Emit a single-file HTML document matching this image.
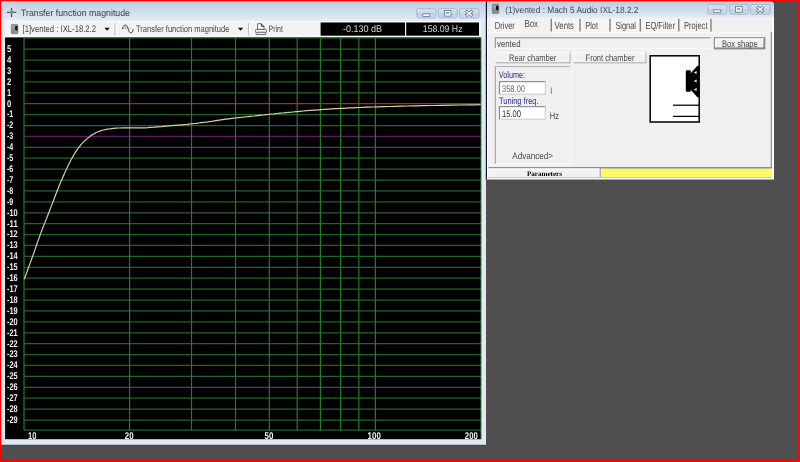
<!DOCTYPE html>
<html lang="en">
<head>
<meta charset="utf-8">
<title>Transfer function magnitude</title>
<style>
html,body{margin:0;padding:0;background:#4f4f4f;overflow:hidden}
body{width:800px;height:462px;font-family:"Liberation Sans",sans-serif}
svg{display:block;position:absolute;left:0;top:0;will-change:transform}
</style>
</head>
<body>
<svg width="800" height="462" viewBox="0 0 800 462" text-rendering="geometricPrecision">
<defs>
<linearGradient id="tb" x1="0" y1="0" x2="0" y2="1">
<stop offset="0" stop-color="#c2cad6"/><stop offset="0.2" stop-color="#c6d4e4"/><stop offset="0.55" stop-color="#cfddec"/><stop offset="0.85" stop-color="#dde7f3"/><stop offset="1" stop-color="#e8eff7"/>
</linearGradient>
<linearGradient id="btn" x1="0" y1="0" x2="0" y2="1">
<stop offset="0" stop-color="#d6e1ef"/><stop offset="0.45" stop-color="#ccdaeb"/><stop offset="0.5" stop-color="#c0d0e4"/><stop offset="1" stop-color="#cbd9ea"/>
</linearGradient>
</defs>
<rect x="0" y="0" width="800" height="462" fill="#4f4f4f" />
<g id="win-plot">
<rect x="1" y="1" width="485" height="444.3" fill="#2e3238" />
<rect x="1" y="1" width="485" height="443.8" fill="#e0e8f4" />
<rect x="1" y="1" width="485" height="20" fill="url(#tb)" />
<g stroke="#333" stroke-width="1" fill="none"><line x1="7" y1="12.3" x2="16.3" y2="12.3"/><line x1="11.6" y1="8" x2="11.6" y2="17"/></g>
<circle cx="11.6" cy="12.3" r="1.8" fill="#8a8a80"/>
<text x="21" y="16.3" font-size="9.3" fill="#3a4250" font-family="Liberation Sans, sans-serif" textLength="109" lengthAdjust="spacingAndGlyphs" >Transfer function magnitude</text>
<rect x="416.8" y="8.6" width="19" height="9.4" rx="1.6" fill="url(#btn)" stroke="#9db1cc" stroke-width="0.8"/>
<rect x="422.8" y="13.8" width="7" height="2.6" fill="#f4f6f8" stroke="#5d6a7c" stroke-width="0.7"/>
<rect x="438.2" y="8.6" width="19" height="9.4" rx="1.6" fill="url(#btn)" stroke="#9db1cc" stroke-width="0.8"/>
<rect x="444.4" y="10.5" width="6.6" height="5.6" fill="#f4f6f8" stroke="#5d6a7c" stroke-width="0.7"/>
<rect x="445.9" y="12.100000000000001" width="3.2" height="1.6" fill="#8796aa"/>
<rect x="459.4" y="8.6" width="19.6" height="9.4" rx="1.6" fill="url(#btn)" stroke="#9db1cc" stroke-width="0.8"/>
<g stroke="#5d6a7c" stroke-width="2.9" stroke-linecap="square"><line x1="467.09999999999997" y1="11.600000000000001" x2="471.3" y2="15.0"/><line x1="467.09999999999997" y1="15.0" x2="471.3" y2="11.600000000000001"/></g>
<g stroke="#f4f6f8" stroke-width="1.6" stroke-linecap="square"><line x1="467.09999999999997" y1="11.600000000000001" x2="471.3" y2="15.0"/><line x1="467.09999999999997" y1="15.0" x2="471.3" y2="11.600000000000001"/></g>
<rect x="5" y="21" width="476.4" height="16.5" fill="#f3f3f3" />
<rect x="5" y="21" width="476.4" height="1" fill="#fbfbfb" />
<rect x="5" y="35.8" width="476.4" height="1.6" fill="#ffffff" />
<rect x="11.4" y="24.4" width="6.5" height="9.3" rx="0.8" fill="#8e8e8e" stroke="#6e6e6e" stroke-width="0.6"/>
<path d="M15.4 26 L17.4 26 L17.4 30.4 L16 30.4 L15 29 Z" fill="#0c0c0c"/>
<rect x="12.4" y="25.6" width="2.4" height="3" fill="#a4a4a4" />
<text x="22.5" y="32.1" font-size="9.5" fill="#484848" font-family="Liberation Sans, sans-serif" textLength="73.5" lengthAdjust="spacingAndGlyphs" >[1]vented : IXL-18.2.2</text>
<path d="M104.4 27.8 L109.8 27.8 L107.1 30.8 Z" fill="#111"/>
<line x1="115" y1="22.8" x2="115" y2="35.5" stroke="#c6c6c6" stroke-width="1.4" />
<line x1="116.2" y1="22.8" x2="116.2" y2="35.5" stroke="#fdfdfd" stroke-width="1" />
<path d="M122.4 29.2 C123.2 24.6,126.4 23.6,127.9 28 L127.9 29.2 Z" fill="#c9c9c9"/>
<ellipse cx="130.7" cy="30.2" rx="2.2" ry="2.4" fill="#fbfbfb" stroke="#b5b5b5" stroke-width="0.6"/>
<path d="M122.4 29.2 C123.2 24.4,126.4 23.4,127.9 28 C128.8 31.2,129.6 32.8,130.9 32.8 C132.2 32.8,132.9 31.4,133.2 29.4" fill="none" stroke="#4a4a4a" stroke-width="1"/>
<text x="136" y="32.1" font-size="9.5" fill="#484848" font-family="Liberation Sans, sans-serif" textLength="93.4" lengthAdjust="spacingAndGlyphs" >Transfer function magnitude</text>
<path d="M237.8 27.8 L243.2 27.8 L240.5 30.8 Z" fill="#111"/>
<line x1="248.5" y1="22.8" x2="248.5" y2="35.5" stroke="#bcbcbc" stroke-width="1.2" />
<line x1="249.6" y1="22.8" x2="249.6" y2="35.5" stroke="#fdfdfd" stroke-width="1" />
<g fill="#fafafa" stroke="#5c5c5c" stroke-width="0.9"><path d="M257.6 29.6 L257.6 23.7 L261.4 23.7 L264 26.4 L264 29.6 Z"/><rect x="255.5" y="29.4" width="11" height="3" rx="0.9"/><rect x="256.1" y="32.3" width="9.8" height="2.2" rx="0.5"/></g>
<path d="M261.4 23.9 L261.6 26.3 L263.8 26.5" fill="none" stroke="#222" stroke-width="0.9"/>
<text x="268.6" y="32.1" font-size="9.5" fill="#484848" font-family="Liberation Sans, sans-serif" textLength="14.3" lengthAdjust="spacingAndGlyphs" >Print</text>
<rect x="320.6" y="22.5" width="84.4" height="13.2" fill="#000" />
<rect x="406.2" y="22.5" width="72.8" height="13.2" fill="#000" />
<text x="343" y="32.4" font-size="9.7" fill="#d4d4d4" font-family="Liberation Sans, sans-serif" textLength="39" lengthAdjust="spacingAndGlyphs" >-0.130 dB</text>
<text x="422.8" y="32.4" font-size="9.7" fill="#d4d4d4" font-family="Liberation Sans, sans-serif" textLength="39.7" lengthAdjust="spacingAndGlyphs" >158.09 Hz</text>
<rect x="5.1" y="37.4" width="476.1" height="401.8" fill="#000" />
<g id="grid">
<line x1="24.0" y1="38.15" x2="480.9" y2="38.15" stroke="#1f6e2a" stroke-width="0.9" />
<line x1="24.0" y1="49.17" x2="480.9" y2="49.17" stroke="#256428" stroke-width="1.25" />
<line x1="24.0" y1="60.07" x2="480.9" y2="60.07" stroke="#256428" stroke-width="1.25" />
<line x1="24.0" y1="70.98" x2="480.9" y2="70.98" stroke="#256428" stroke-width="1.25" />
<line x1="24.0" y1="81.89" x2="480.9" y2="81.89" stroke="#256428" stroke-width="1.25" />
<line x1="24.0" y1="92.79" x2="480.9" y2="92.79" stroke="#256428" stroke-width="1.25" />
<line x1="24.0" y1="103.7" x2="480.9" y2="103.7" stroke="#a82a24" stroke-width="1.25" />
<line x1="24.0" y1="114.61" x2="480.9" y2="114.61" stroke="#256428" stroke-width="1.25" />
<line x1="24.0" y1="125.51" x2="480.9" y2="125.51" stroke="#256428" stroke-width="1.25" />
<line x1="24.0" y1="136.42" x2="480.9" y2="136.42" stroke="#5e1c60" stroke-width="1.25" />
<line x1="24.0" y1="147.33" x2="480.9" y2="147.33" stroke="#256428" stroke-width="1.25" />
<line x1="24.0" y1="158.24" x2="480.9" y2="158.24" stroke="#256428" stroke-width="1.25" />
<line x1="24.0" y1="169.14" x2="480.9" y2="169.14" stroke="#256428" stroke-width="1.25" />
<line x1="24.0" y1="180.05" x2="480.9" y2="180.05" stroke="#256428" stroke-width="1.25" />
<line x1="24.0" y1="190.96" x2="480.9" y2="190.96" stroke="#256428" stroke-width="1.25" />
<line x1="24.0" y1="201.86" x2="480.9" y2="201.86" stroke="#256428" stroke-width="1.25" />
<line x1="24.0" y1="212.77" x2="480.9" y2="212.77" stroke="#256428" stroke-width="1.25" />
<line x1="24.0" y1="223.68" x2="480.9" y2="223.68" stroke="#256428" stroke-width="1.25" />
<line x1="24.0" y1="234.58" x2="480.9" y2="234.58" stroke="#256428" stroke-width="1.25" />
<line x1="24.0" y1="245.49" x2="480.9" y2="245.49" stroke="#256428" stroke-width="1.25" />
<line x1="24.0" y1="256.4" x2="480.9" y2="256.4" stroke="#256428" stroke-width="1.25" />
<line x1="24.0" y1="267.31" x2="480.9" y2="267.31" stroke="#256428" stroke-width="1.25" />
<line x1="24.0" y1="278.21" x2="480.9" y2="278.21" stroke="#256428" stroke-width="1.25" />
<line x1="24.0" y1="289.12" x2="480.9" y2="289.12" stroke="#256428" stroke-width="1.25" />
<line x1="24.0" y1="300.03" x2="480.9" y2="300.03" stroke="#256428" stroke-width="1.25" />
<line x1="24.0" y1="310.93" x2="480.9" y2="310.93" stroke="#256428" stroke-width="1.25" />
<line x1="24.0" y1="321.84" x2="480.9" y2="321.84" stroke="#256428" stroke-width="1.25" />
<line x1="24.0" y1="332.75" x2="480.9" y2="332.75" stroke="#256428" stroke-width="1.25" />
<line x1="24.0" y1="343.65" x2="480.9" y2="343.65" stroke="#256428" stroke-width="1.25" />
<line x1="24.0" y1="354.56" x2="480.9" y2="354.56" stroke="#256428" stroke-width="1.25" />
<line x1="24.0" y1="365.47" x2="480.9" y2="365.47" stroke="#256428" stroke-width="1.25" />
<line x1="24.0" y1="376.38" x2="480.9" y2="376.38" stroke="#256428" stroke-width="1.25" />
<line x1="24.0" y1="387.28" x2="480.9" y2="387.28" stroke="#256428" stroke-width="1.25" />
<line x1="24.0" y1="398.19" x2="480.9" y2="398.19" stroke="#256428" stroke-width="1.25" />
<line x1="24.0" y1="409.1" x2="480.9" y2="409.1" stroke="#256428" stroke-width="1.25" />
<line x1="24.0" y1="420.0" x2="480.9" y2="420.0" stroke="#256428" stroke-width="1.25" />
<line x1="24.0" y1="430.1" x2="480.9" y2="430.1" stroke="#256428" stroke-width="1.25" />
<line x1="24.0" y1="37.8" x2="24.0" y2="430.6" stroke="#22752c" stroke-width="1.25" />
<line x1="129.6" y1="37.8" x2="129.6" y2="430.6" stroke="#237a28" stroke-width="1.2" />
<line x1="191.5" y1="37.8" x2="191.5" y2="430.6" stroke="#237a28" stroke-width="1.2" />
<line x1="235.5" y1="37.8" x2="235.5" y2="430.6" stroke="#237a28" stroke-width="1.2" />
<line x1="269.3" y1="37.8" x2="269.3" y2="430.6" stroke="#237a28" stroke-width="1.2" />
<line x1="297.2" y1="37.8" x2="297.2" y2="430.6" stroke="#237a28" stroke-width="1.2" />
<line x1="320.4" y1="37.8" x2="320.4" y2="430.6" stroke="#237a28" stroke-width="1.2" />
<line x1="340.6" y1="37.8" x2="340.6" y2="430.6" stroke="#237a28" stroke-width="1.2" />
<line x1="358.8" y1="37.8" x2="358.8" y2="430.6" stroke="#237a28" stroke-width="1.2" />
<line x1="375.4" y1="37.8" x2="375.4" y2="430.6" stroke="#237a28" stroke-width="1.2" />
<line x1="481.2" y1="37.6" x2="481.2" y2="439.1" stroke="#62d070" stroke-width="0.9" />
</g>
<g id="ylabels">
<text x="7" y="52.02" font-size="9.8" fill="#f0f0f0" font-family="Liberation Sans, sans-serif" textLength="4.3" lengthAdjust="spacingAndGlyphs" font-weight="bold">5</text>
<text x="7" y="62.92" font-size="9.8" fill="#f0f0f0" font-family="Liberation Sans, sans-serif" textLength="4.3" lengthAdjust="spacingAndGlyphs" font-weight="bold">4</text>
<text x="7" y="73.83" font-size="9.8" fill="#f0f0f0" font-family="Liberation Sans, sans-serif" textLength="4.3" lengthAdjust="spacingAndGlyphs" font-weight="bold">3</text>
<text x="7" y="84.74" font-size="9.8" fill="#f0f0f0" font-family="Liberation Sans, sans-serif" textLength="4.3" lengthAdjust="spacingAndGlyphs" font-weight="bold">2</text>
<text x="7" y="95.64" font-size="9.8" fill="#f0f0f0" font-family="Liberation Sans, sans-serif" textLength="4.3" lengthAdjust="spacingAndGlyphs" font-weight="bold">1</text>
<text x="7" y="106.55" font-size="9.8" fill="#f0f0f0" font-family="Liberation Sans, sans-serif" textLength="4.3" lengthAdjust="spacingAndGlyphs" font-weight="bold">0</text>
<text x="7" y="117.46" font-size="9.8" fill="#f0f0f0" font-family="Liberation Sans, sans-serif" textLength="6.3" lengthAdjust="spacingAndGlyphs" font-weight="bold">-1</text>
<text x="7" y="128.36" font-size="9.8" fill="#f0f0f0" font-family="Liberation Sans, sans-serif" textLength="6.3" lengthAdjust="spacingAndGlyphs" font-weight="bold">-2</text>
<text x="7" y="139.27" font-size="9.8" fill="#f0f0f0" font-family="Liberation Sans, sans-serif" textLength="6.3" lengthAdjust="spacingAndGlyphs" font-weight="bold">-3</text>
<text x="7" y="150.18" font-size="9.8" fill="#f0f0f0" font-family="Liberation Sans, sans-serif" textLength="6.3" lengthAdjust="spacingAndGlyphs" font-weight="bold">-4</text>
<text x="7" y="161.09" font-size="9.8" fill="#f0f0f0" font-family="Liberation Sans, sans-serif" textLength="6.3" lengthAdjust="spacingAndGlyphs" font-weight="bold">-5</text>
<text x="7" y="171.99" font-size="9.8" fill="#f0f0f0" font-family="Liberation Sans, sans-serif" textLength="6.3" lengthAdjust="spacingAndGlyphs" font-weight="bold">-6</text>
<text x="7" y="182.9" font-size="9.8" fill="#f0f0f0" font-family="Liberation Sans, sans-serif" textLength="6.3" lengthAdjust="spacingAndGlyphs" font-weight="bold">-7</text>
<text x="7" y="193.81" font-size="9.8" fill="#f0f0f0" font-family="Liberation Sans, sans-serif" textLength="6.3" lengthAdjust="spacingAndGlyphs" font-weight="bold">-8</text>
<text x="7" y="204.71" font-size="9.8" fill="#f0f0f0" font-family="Liberation Sans, sans-serif" textLength="6.3" lengthAdjust="spacingAndGlyphs" font-weight="bold">-9</text>
<text x="7" y="215.62" font-size="9.8" fill="#f0f0f0" font-family="Liberation Sans, sans-serif" textLength="10.7" lengthAdjust="spacingAndGlyphs" font-weight="bold">-10</text>
<text x="7" y="226.53" font-size="9.8" fill="#f0f0f0" font-family="Liberation Sans, sans-serif" textLength="10.7" lengthAdjust="spacingAndGlyphs" font-weight="bold">-11</text>
<text x="7" y="237.43" font-size="9.8" fill="#f0f0f0" font-family="Liberation Sans, sans-serif" textLength="10.7" lengthAdjust="spacingAndGlyphs" font-weight="bold">-12</text>
<text x="7" y="248.34" font-size="9.8" fill="#f0f0f0" font-family="Liberation Sans, sans-serif" textLength="10.7" lengthAdjust="spacingAndGlyphs" font-weight="bold">-13</text>
<text x="7" y="259.25" font-size="9.8" fill="#f0f0f0" font-family="Liberation Sans, sans-serif" textLength="10.7" lengthAdjust="spacingAndGlyphs" font-weight="bold">-14</text>
<text x="7" y="270.16" font-size="9.8" fill="#f0f0f0" font-family="Liberation Sans, sans-serif" textLength="10.7" lengthAdjust="spacingAndGlyphs" font-weight="bold">-15</text>
<text x="7" y="281.06" font-size="9.8" fill="#f0f0f0" font-family="Liberation Sans, sans-serif" textLength="10.7" lengthAdjust="spacingAndGlyphs" font-weight="bold">-16</text>
<text x="7" y="291.97" font-size="9.8" fill="#f0f0f0" font-family="Liberation Sans, sans-serif" textLength="10.7" lengthAdjust="spacingAndGlyphs" font-weight="bold">-17</text>
<text x="7" y="302.88" font-size="9.8" fill="#f0f0f0" font-family="Liberation Sans, sans-serif" textLength="10.7" lengthAdjust="spacingAndGlyphs" font-weight="bold">-18</text>
<text x="7" y="313.78" font-size="9.8" fill="#f0f0f0" font-family="Liberation Sans, sans-serif" textLength="10.7" lengthAdjust="spacingAndGlyphs" font-weight="bold">-19</text>
<text x="7" y="324.69" font-size="9.8" fill="#f0f0f0" font-family="Liberation Sans, sans-serif" textLength="10.7" lengthAdjust="spacingAndGlyphs" font-weight="bold">-20</text>
<text x="7" y="335.6" font-size="9.8" fill="#f0f0f0" font-family="Liberation Sans, sans-serif" textLength="10.7" lengthAdjust="spacingAndGlyphs" font-weight="bold">-21</text>
<text x="7" y="346.5" font-size="9.8" fill="#f0f0f0" font-family="Liberation Sans, sans-serif" textLength="10.7" lengthAdjust="spacingAndGlyphs" font-weight="bold">-22</text>
<text x="7" y="357.41" font-size="9.8" fill="#f0f0f0" font-family="Liberation Sans, sans-serif" textLength="10.7" lengthAdjust="spacingAndGlyphs" font-weight="bold">-23</text>
<text x="7" y="368.32" font-size="9.8" fill="#f0f0f0" font-family="Liberation Sans, sans-serif" textLength="10.7" lengthAdjust="spacingAndGlyphs" font-weight="bold">-24</text>
<text x="7" y="379.23" font-size="9.8" fill="#f0f0f0" font-family="Liberation Sans, sans-serif" textLength="10.7" lengthAdjust="spacingAndGlyphs" font-weight="bold">-25</text>
<text x="7" y="390.13" font-size="9.8" fill="#f0f0f0" font-family="Liberation Sans, sans-serif" textLength="10.7" lengthAdjust="spacingAndGlyphs" font-weight="bold">-26</text>
<text x="7" y="401.04" font-size="9.8" fill="#f0f0f0" font-family="Liberation Sans, sans-serif" textLength="10.7" lengthAdjust="spacingAndGlyphs" font-weight="bold">-27</text>
<text x="7" y="411.95" font-size="9.8" fill="#f0f0f0" font-family="Liberation Sans, sans-serif" textLength="10.7" lengthAdjust="spacingAndGlyphs" font-weight="bold">-28</text>
<text x="7" y="422.85" font-size="9.8" fill="#f0f0f0" font-family="Liberation Sans, sans-serif" textLength="10.7" lengthAdjust="spacingAndGlyphs" font-weight="bold">-29</text>
</g>
<g id="xlabels">
<text x="28" y="438.7" font-size="9.8" fill="#f0f0f0" font-family="Liberation Sans, sans-serif" textLength="8.4" lengthAdjust="spacingAndGlyphs" font-weight="bold">10</text>
<text x="124.8" y="438.7" font-size="9.8" fill="#f0f0f0" font-family="Liberation Sans, sans-serif" textLength="8.8" lengthAdjust="spacingAndGlyphs" font-weight="bold">20</text>
<text x="264.6" y="438.7" font-size="9.8" fill="#f0f0f0" font-family="Liberation Sans, sans-serif" textLength="8.8" lengthAdjust="spacingAndGlyphs" font-weight="bold">50</text>
<text x="367.6" y="438.7" font-size="9.8" fill="#f0f0f0" font-family="Liberation Sans, sans-serif" textLength="13.2" lengthAdjust="spacingAndGlyphs" font-weight="bold">100</text>
<text x="464.8" y="438.7" font-size="9.8" fill="#f0f0f0" font-family="Liberation Sans, sans-serif" textLength="13" lengthAdjust="spacingAndGlyphs" font-weight="bold">200</text>
</g>
<polyline id="curve" fill="none" stroke="#d6d0a4" stroke-width="1.2" stroke-linejoin="round" points="24.2,279.2 24.9,277.3 26.0,274.5 27.2,271.2 28.4,267.8 29.8,264.1 31.3,260.0 32.8,255.9 34.1,252.1 35.3,248.8 36.3,245.8 37.3,242.9 38.3,240.0 39.4,237.1 40.4,234.1 41.5,231.3 42.5,228.7 43.4,226.2 44.4,224.0 45.2,221.8 46.0,219.9 46.6,218.3 47.1,217.0 47.7,215.5 48.5,213.6 49.5,210.8 50.8,207.4 52.2,203.9 53.4,200.7 54.5,197.8 55.6,195.0 56.6,192.3 57.6,189.8 58.5,187.5 59.3,185.6 60.1,183.5 61.1,181.2 62.3,178.5 63.6,175.4 65.0,172.4 66.2,169.7 67.2,167.6 68.1,165.7 68.9,164.1 69.7,162.4 70.5,160.8 71.4,159.3 72.2,157.8 73.0,156.3 73.8,155.0 74.6,153.6 75.4,152.3 76.2,151.1 77.0,149.9 77.8,148.7 78.7,147.6 79.5,146.6 80.3,145.6 81.0,144.7 81.8,143.8 82.7,142.9 83.7,141.8 84.8,140.7 86.0,139.6 87.1,138.6 88.2,137.7 89.3,136.9 90.3,136.1 91.4,135.3 92.5,134.6 93.6,134.0 94.6,133.4 95.7,132.8 96.8,132.3 97.8,131.8 98.9,131.4 100.0,131.0 101.1,130.6 102.2,130.3 103.3,130.0 104.4,129.8 105.5,129.5 106.5,129.3 107.6,129.1 108.7,129.0 110.0,128.8 111.3,128.6 112.7,128.4 114.1,128.3 115.5,128.2 116.8,128.1 118.3,128.0 120.0,128.0 122.1,127.9 124.5,127.9 127.1,127.9 129.6,127.9 132.2,127.9 134.9,127.9 137.6,127.9 140.0,127.9 141.9,127.9 143.5,127.8 145.3,127.8 147.5,127.7 150.6,127.4 154.2,127.2 157.9,126.8 161.2,126.6 163.9,126.3 166.2,126.1 168.6,125.9 171.2,125.7 174.6,125.4 178.3,125.1 182.0,124.8 185.0,124.5 187.1,124.3 188.7,124.1 190.2,124.0 191.9,123.8 194.1,123.5 196.5,123.3 198.9,123.0 201.2,122.7 203.4,122.4 205.4,122.2 207.6,121.9 210.0,121.5 212.9,121.1 216.0,120.6 219.3,120.1 222.5,119.6 225.6,119.2 228.8,118.8 231.9,118.4 235.0,118.0 238.1,117.7 241.2,117.4 244.4,117.0 247.5,116.7 250.7,116.3 254.0,116.0 257.1,115.6 260.0,115.3 262.4,115.0 264.5,114.8 266.5,114.5 268.8,114.3 271.4,114.0 274.2,113.8 277.1,113.5 280.0,113.2 282.9,113.0 285.9,112.7 288.8,112.4 291.2,112.2 293.0,112.0 294.3,111.9 295.6,111.7 297.5,111.6 300.1,111.3 303.0,111.0 306.3,110.7 310.0,110.4 314.3,110.1 319.0,109.8 323.8,109.4 328.0,109.1 331.4,108.9 334.3,108.7 337.1,108.6 340.0,108.4 343.1,108.3 346.3,108.1 349.6,107.9 353.0,107.8 356.4,107.6 359.9,107.5 363.7,107.3 368.0,107.2 373.0,107.0 378.4,106.8 384.2,106.7 390.0,106.5 395.5,106.3 401.0,106.2 407.0,106.0 414.0,105.9 422.7,105.7 432.7,105.5 442.8,105.3 452.0,105.1 460.5,105.0 468.7,104.9 475.7,104.8 480.6,104.7"/>
</g>
<g id="win-box">
<path d="M486 1.5 L770 1.5 Q774 1.5 774 5.5 L774 179.6 L486 179.6 Z" fill="#ffffff"/>
<path d="M486 1.5 L770 1.5 Q774 1.5 774 5.5 L774 18 L486 18 Z" fill="url(#tb)"/>
<rect x="485.8" y="1.5" width="1.2" height="178.1" fill="#101a2a" />
<rect x="488" y="17.5" width="284" height="160" fill="#f0f0f0" />
<rect x="492.3" y="4.3" width="6.5" height="9.2" rx="0.8" fill="#8e8e8e" stroke="#6e6e6e" stroke-width="0.6"/>
<path d="M496.3 5.8 L498.3 5.8 L498.3 10.4 L496.9 10.4 L495.9 9 Z" fill="#0c0c0c"/>
<rect x="493.3" y="5.5" width="2.4" height="3" fill="#a4a4a4" />
<text x="505.2" y="12.8" font-size="9" fill="#414b5c" font-family="Liberation Sans, sans-serif" textLength="133.3" lengthAdjust="spacingAndGlyphs" >(1)vented : Mach 5 Audio IXL-18.2.2</text>
<rect x="707.7" y="4.6" width="19" height="9.6" rx="1.6" fill="url(#btn)" stroke="#9db1cc" stroke-width="0.8"/>
<rect x="713.7" y="9.899999999999999" width="7" height="2.6" fill="#f4f6f8" stroke="#5d6a7c" stroke-width="0.7"/>
<rect x="729.6" y="4.6" width="18.6" height="9.6" rx="1.6" fill="url(#btn)" stroke="#9db1cc" stroke-width="0.8"/>
<rect x="735.6" y="6.599999999999999" width="6.6" height="5.6" fill="#f4f6f8" stroke="#5d6a7c" stroke-width="0.7"/>
<rect x="737.1" y="8.2" width="3.2" height="1.6" fill="#8796aa"/>
<rect x="750.4" y="4.6" width="19.6" height="9.6" rx="1.6" fill="url(#btn)" stroke="#9db1cc" stroke-width="0.8"/>
<g stroke="#5d6a7c" stroke-width="2.9" stroke-linecap="square"><line x1="758.0999999999999" y1="7.699999999999998" x2="762.3" y2="11.099999999999998"/><line x1="758.0999999999999" y1="11.099999999999998" x2="762.3" y2="7.699999999999998"/></g>
<g stroke="#f4f6f8" stroke-width="1.6" stroke-linecap="square"><line x1="758.0999999999999" y1="7.699999999999998" x2="762.3" y2="11.099999999999998"/><line x1="758.0999999999999" y1="11.099999999999998" x2="762.3" y2="7.699999999999998"/></g>
<rect x="488" y="18" width="284" height="14" fill="#f0f0f0" />
<rect x="490.5" y="19" width="29" height="12.5" fill="#f5f5f5" />
<rect x="520" y="18.5" width="30.5" height="14" fill="#f2f2f2" />
<line x1="488" y1="32.4" x2="520" y2="32.4" stroke="#fafafa" stroke-width="1" />
<line x1="551" y1="32.4" x2="771" y2="32.4" stroke="#fafafa" stroke-width="1" />
<rect x="552.5" y="19" width="26.5" height="12.5" fill="#f5f5f5" />
<rect x="581" y="19" width="28" height="12.5" fill="#f5f5f5" />
<rect x="611" y="19" width="28.299999999999955" height="12.5" fill="#f5f5f5" />
<rect x="641.3" y="19" width="36.5" height="12.5" fill="#f5f5f5" />
<rect x="679.8" y="19" width="30.200000000000045" height="12.5" fill="#f5f5f5" />
<line x1="551.3" y1="18.8" x2="551.3" y2="31.5" stroke="#787878" stroke-width="1.25" />
<line x1="580" y1="18.8" x2="580" y2="31.5" stroke="#787878" stroke-width="1.25" />
<line x1="610" y1="18.8" x2="610" y2="31.5" stroke="#787878" stroke-width="1.25" />
<line x1="640.3" y1="18.8" x2="640.3" y2="31.5" stroke="#787878" stroke-width="1.25" />
<line x1="678.8" y1="18.8" x2="678.8" y2="31.5" stroke="#787878" stroke-width="1.25" />
<line x1="711" y1="18.8" x2="711" y2="31.5" stroke="#787878" stroke-width="1.25" />
<text x="494.8" y="28.6" font-size="10.2" fill="#484848" font-family="Liberation Sans, sans-serif" textLength="20" lengthAdjust="spacingAndGlyphs" >Driver</text>
<text x="524.4" y="27.0" font-size="10.2" fill="#484848" font-family="Liberation Sans, sans-serif" textLength="13.6" lengthAdjust="spacingAndGlyphs" >Box</text>
<text x="554.6" y="28.6" font-size="10.2" fill="#484848" font-family="Liberation Sans, sans-serif" textLength="19.4" lengthAdjust="spacingAndGlyphs" >Vents</text>
<text x="585.3" y="28.6" font-size="10.2" fill="#484848" font-family="Liberation Sans, sans-serif" textLength="12.7" lengthAdjust="spacingAndGlyphs" >Plot</text>
<text x="615.4" y="28.6" font-size="10.2" fill="#484848" font-family="Liberation Sans, sans-serif" textLength="20.6" lengthAdjust="spacingAndGlyphs" >Signal</text>
<text x="645.4" y="28.6" font-size="10.2" fill="#484848" font-family="Liberation Sans, sans-serif" textLength="29.6" lengthAdjust="spacingAndGlyphs" >EQ/Filter</text>
<text x="684" y="28.6" font-size="10.2" fill="#484848" font-family="Liberation Sans, sans-serif" textLength="23.5" lengthAdjust="spacingAndGlyphs" >Project</text>
<line x1="771.3" y1="32" x2="771.3" y2="168" stroke="#7a7a7a" stroke-width="1" />
<rect x="495" y="37.5" width="215.6" height="11.3" fill="#f0f0f0" />
<line x1="495" y1="37.8" x2="710.6" y2="37.8" stroke="#8a8a8a" stroke-width="1" />
<line x1="495.3" y1="37.5" x2="495.3" y2="48.8" stroke="#8a8a8a" stroke-width="1" />
<line x1="495" y1="48.6" x2="710.6" y2="48.6" stroke="#f9f9f9" stroke-width="1" />
<text x="497" y="46.8" font-size="9.5" fill="#484848" font-family="Liberation Sans, sans-serif" textLength="23.5" lengthAdjust="spacingAndGlyphs" >vented</text>
<rect x="714.4" y="37.8" width="50.4" height="11" fill="#f0f0f0" stroke="#8c8c8c" stroke-width="1.2"/>
<line x1="715.5" y1="39" x2="763.8" y2="39" stroke="#ffffff" stroke-width="1" />
<line x1="715.5" y1="39" x2="715.5" y2="48" stroke="#ffffff" stroke-width="1" />
<line x1="715" y1="48" x2="764.3" y2="48" stroke="#707070" stroke-width="1" />
<line x1="764" y1="38.5" x2="764" y2="48.3" stroke="#707070" stroke-width="1" />
<text x="722" y="46.6" font-size="9.5" fill="#484848" font-family="Liberation Sans, sans-serif" textLength="35.8" lengthAdjust="spacingAndGlyphs" >Box shape</text>
<rect x="495.6" y="52.5" width="74.8" height="10.6" fill="#f1f1f1" />
<line x1="495.6" y1="52.9" x2="570.4" y2="52.9" stroke="#fafafa" stroke-width="1" />
<line x1="496.0" y1="52.5" x2="496.0" y2="63.1" stroke="#fafafa" stroke-width="1" />
<line x1="495.6" y1="62.800000000000004" x2="570.4" y2="62.800000000000004" stroke="#a9a9a9" stroke-width="1" />
<line x1="570.1" y1="52.5" x2="570.1" y2="63.1" stroke="#b5b5b5" stroke-width="1" />
<text x="509" y="60.5" font-size="9.5" fill="#484848" font-family="Liberation Sans, sans-serif" textLength="47.3" lengthAdjust="spacingAndGlyphs" >Rear chamber</text>
<rect x="573.8" y="52.5" width="72.4" height="10.6" fill="#f1f1f1" />
<line x1="573.8" y1="52.9" x2="646.1999999999999" y2="52.9" stroke="#fafafa" stroke-width="1" />
<line x1="574.1999999999999" y1="52.5" x2="574.1999999999999" y2="63.1" stroke="#fafafa" stroke-width="1" />
<line x1="573.8" y1="62.800000000000004" x2="646.1999999999999" y2="62.800000000000004" stroke="#a9a9a9" stroke-width="1" />
<line x1="645.9" y1="52.5" x2="645.9" y2="63.1" stroke="#b5b5b5" stroke-width="1" />
<text x="585.6" y="60.5" font-size="9.5" fill="#484848" font-family="Liberation Sans, sans-serif" textLength="48.8" lengthAdjust="spacingAndGlyphs" >Front chamber</text>
<line x1="495.3" y1="66.3" x2="495.3" y2="164" stroke="#9a9a9a" stroke-width="1" />
<line x1="495" y1="66.6" x2="570.5" y2="66.6" stroke="#b0b0b0" stroke-width="1" />
<line x1="570.8" y1="66.5" x2="570.8" y2="164.5" stroke="#fafafa" stroke-width="1" />
<line x1="495" y1="164.3" x2="571" y2="164.3" stroke="#fafafa" stroke-width="1" />
<text x="498.8" y="77.8" font-size="9.5" fill="#2c2c8c" font-family="Liberation Sans, sans-serif" textLength="26.2" lengthAdjust="spacingAndGlyphs" >Volume:</text>
<rect x="499" y="81.3" width="46.6" height="13.2" fill="#ffffff" />
<line x1="499" y1="81.7" x2="545.6" y2="81.7" stroke="#7a7a7a" stroke-width="1" />
<line x1="499.4" y1="81.3" x2="499.4" y2="94.5" stroke="#7a7a7a" stroke-width="1" />
<line x1="499" y1="94.2" x2="545.6" y2="94.2" stroke="#c8c8c8" stroke-width="1" />
<line x1="545.3000000000001" y1="81.3" x2="545.3000000000001" y2="94.5" stroke="#c8c8c8" stroke-width="1" />
<text x="502" y="91.5" font-size="9.5" fill="#6a6a6a" font-family="Liberation Sans, sans-serif" textLength="23" lengthAdjust="spacingAndGlyphs" >358.00</text>
<text x="550.2" y="94.4" font-size="9" fill="#707070" font-family="Liberation Sans, sans-serif" >l</text>
<text x="499" y="104.2" font-size="9.5" fill="#2c2c8c" font-family="Liberation Sans, sans-serif" textLength="39.5" lengthAdjust="spacingAndGlyphs" >Tuning freq.</text>
<rect x="499" y="106.3" width="46.6" height="13.2" fill="#ffffff" />
<line x1="499" y1="106.7" x2="545.6" y2="106.7" stroke="#7a7a7a" stroke-width="1" />
<line x1="499.4" y1="106.3" x2="499.4" y2="119.5" stroke="#7a7a7a" stroke-width="1" />
<line x1="499" y1="119.2" x2="545.6" y2="119.2" stroke="#c8c8c8" stroke-width="1" />
<line x1="545.3000000000001" y1="106.3" x2="545.3000000000001" y2="119.5" stroke="#c8c8c8" stroke-width="1" />
<text x="502" y="116.5" font-size="9.5" fill="#2a2a2a" font-family="Liberation Sans, sans-serif" textLength="19" lengthAdjust="spacingAndGlyphs" >15.00</text>
<text x="549.8" y="119.2" font-size="9.5" fill="#484848" font-family="Liberation Sans, sans-serif" textLength="9.2" lengthAdjust="spacingAndGlyphs" >Hz</text>
<text x="512.3" y="158.7" font-size="9.5" fill="#484848" font-family="Liberation Sans, sans-serif" textLength="40.7" lengthAdjust="spacingAndGlyphs" >Advanced&gt;</text>
<rect x="650.2" y="55.8" width="49" height="66.2" fill="#ffffff" stroke="#000" stroke-width="1.5"/>
<line x1="673" y1="105.2" x2="699.5" y2="105.2" stroke="#000" stroke-width="1.25" />
<line x1="673" y1="116.4" x2="699.5" y2="116.4" stroke="#000" stroke-width="1.25" />
<rect x="685.8" y="70.2" width="5" height="21.6" rx="1.2" fill="#000"/>
<path d="M689.5 74.6 L697.4 65.8 L699.2 65.8 L699.2 97.2 L697.4 97.2 L689.5 88.4 Z" fill="#000"/>
<path d="M693.8 72.6 L696.6 71.1 L696.6 74.1 Z" fill="#f0f0f0"/>
<path d="M693.8 81 L696.6 79.5 L696.6 82.5 Z" fill="#f0f0f0"/>
<path d="M693.8 89.4 L696.6 87.9 L696.6 90.9 Z" fill="#f0f0f0"/>
<line x1="488.5" y1="167.8" x2="771.8" y2="167.8" stroke="#909090" stroke-width="1.7" />
<rect x="488" y="168.5" width="112" height="8.8" fill="#f2f2f2" />
<line x1="488" y1="169" x2="600" y2="169" stroke="#ffffff" stroke-width="1" />
<rect x="600.6" y="168.7" width="171" height="8.5" fill="#fbfb68" />
<line x1="488.5" y1="177.6" x2="771.8" y2="177.6" stroke="#b4b4a4" stroke-width="0.8" />
<line x1="600.2" y1="168.3" x2="600.2" y2="177" stroke="#808080" stroke-width="0.8" />
<text x="527" y="175.8" font-size="7" fill="#000" font-family="Liberation Serif, serif" textLength="35" lengthAdjust="spacingAndGlyphs" font-weight="bold">Parameters</text>
</g>
<rect x="0" y="0" width="800" height="1.3" fill="#ff0000" />
<rect x="0" y="0" width="1.15" height="462" fill="#ff0000" />
<rect x="798" y="0" width="2" height="462" fill="#ff0000" />
<rect x="0" y="459.9" width="800" height="2.1" fill="#ff0000" />
</svg>
</body>
</html>
